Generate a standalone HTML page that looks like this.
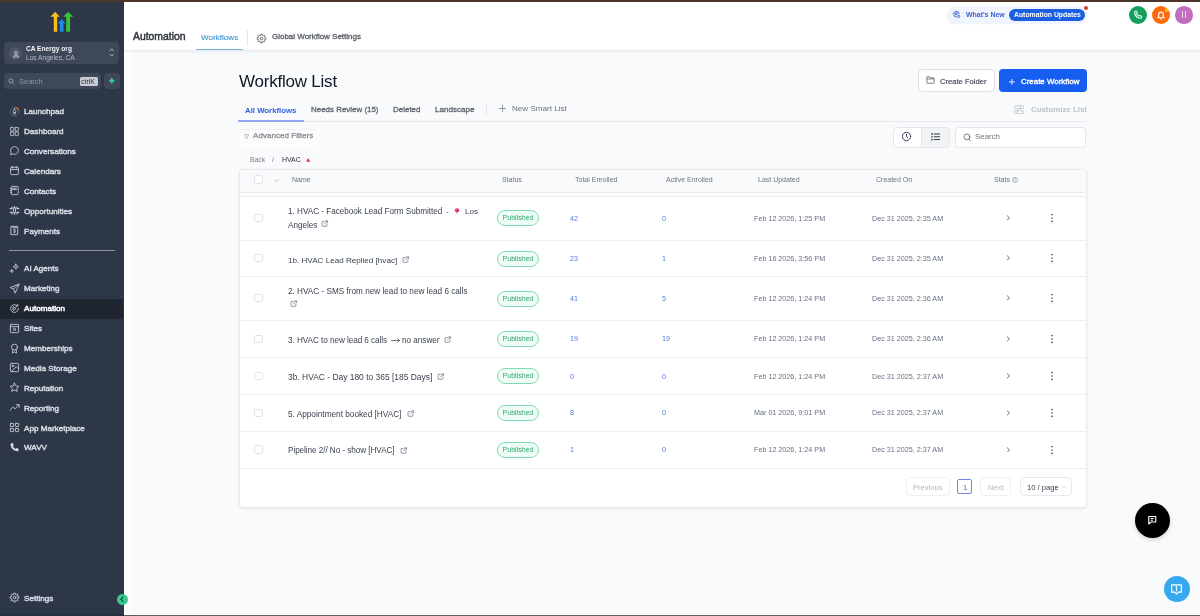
<!DOCTYPE html>
<html><head><meta charset="utf-8">
<style>
*{box-sizing:border-box;margin:0;padding:0}
html,body{width:1200px;height:616px;overflow:hidden;background:#f9fafb;font-family:"Liberation Sans",sans-serif}
.a{position:absolute}
.t{position:absolute;white-space:nowrap;line-height:1;will-change:transform}
#top{left:0;top:0;width:1200px;height:2px;background:#4b3629}
#bot{left:124px;top:614px;width:1076px;height:2px;background:#5f5f5f;border-top:1px solid #fff}
#side{left:0;top:2px;width:124px;height:614px;background:#2d3748}
.n{font-size:8.1px;color:#d3d7de;-webkit-text-stroke:0.5px #d3d7de;left:24.4px}
#card{}
#hdr{left:124px;top:2px;width:1076px;height:49px;background:#fff;border-bottom:1px solid #e8eaee;box-shadow:0 1px 3px rgba(16,24,40,.06)}
.nm{font-size:8.1px;color:#3b4350}
.nm .ext{display:inline-block;vertical-align:-0.5px;margin-left:4.5px}
.pin{display:inline-block;width:6px;height:7px;position:relative;vertical-align:0px}
.pin:before{content:"";position:absolute;left:0.8px;top:0;width:4.4px;height:4.4px;border-radius:50%;background:#e0245e}
.pin:after{content:"";position:absolute;left:2.6px;top:4px;width:0.8px;height:3px;background:#9aa0a8}
.badge{left:497px;width:42px;height:15.6px;border-radius:8px;border:1px solid #7fdcb2;background:#f0fcf6;color:#36a370;font-size:7.06px;line-height:14.2px;text-align:center;white-space:nowrap;will-change:transform}
.num{font-size:7.2px;color:#4f7be0}
.dt{font-size:7.2px;color:#667085}
</style></head><body>
<div id="top" class="a"></div>
<div id="side" class="a"></div>
<div class="a" style="left:0;top:614px;width:124px;height:2px;background:#283140"></div>
<div class="a" style="left:124px;top:51px;width:8px;height:563px;background:#fcfdfd;border-left:1px solid #fff"></div>
<div class="a" style="left:0;top:299px;width:123px;height:19.5px;background:#1f2632"></div>
<!-- logo -->
<svg class="a" style="left:45px;top:6px" width="35" height="30" viewBox="0 0 35 30">
<path fill="#f5bd1f" d="M10.1 5.8L14.8 10.7H12.2V25.8H8.8V10.7H5.4z"/>
<path fill="#1e88f0" d="M16.65 12.9L20.4 17.5H18.5V25.8H14.8V17.5H12.9z"/>
<path fill="#37c13a" d="M23.2 5.8L28.2 10.7H25.1V25.8H21.2V10.7H18.3z"/>
</svg>
<div class="a" style="left:4.3px;top:42px;width:115px;height:22px;border-radius:4px;background:#3e4858"></div>
<div class="a" style="left:8.8px;top:46.8px;width:13.4px;height:13.4px;border-radius:50%;background:#4d5666"></div>
<svg class="a" style="left:11.5px;top:49.5px" width="8" height="8" viewBox="0 0 24 24" fill="none" stroke="#d9dde3" stroke-width="2.4"><circle cx="12" cy="8" r="4.5"/><path d="M4 21c1-4 4-6 8-6s7 2 8 6z"/></svg>
<div class="t" style="left:25.8px;top:46.1px;font-size:6.6px;font-weight:700;color:#f3f4f6">CA Energy org</div>
<div class="t" style="left:25.8px;top:54.6px;font-size:6.6px;color:#b7bdc7">Los Angeles, CA</div>
<svg class="a" style="left:109px;top:48px" width="5.5" height="9" viewBox="0 0 6 10" fill="none" stroke="#c3c8d0" stroke-width="1"><path d="M.8 3.2L3 1l2.2 2.2M.8 6.8L3 9l2.2-2.2"/></svg>
<div class="a" style="left:4.3px;top:73.2px;width:96.4px;height:15.5px;border-radius:4px;background:#3e4858"></div>
<svg class="a" style="left:8.3px;top:78.2px" width="7" height="7" viewBox="0 0 24 24" fill="none" stroke="#aab1bc" stroke-width="2.6"><circle cx="10" cy="10" r="7"/><path d="M15.5 15.5L22 22"/></svg>
<div class="t" style="left:18.6px;top:77.6px;font-size:7.5px;color:#8e96a3">Search</div>
<div class="a" style="left:79.5px;top:76.8px;width:18.4px;height:8.8px;border-radius:1.5px;background:#c9cdd3"></div>
<div class="t" style="left:80.6px;top:77.6px;font-size:7px;color:#2d3748">ctrlK</div>
<div class="a" style="left:103.8px;top:73.2px;width:16px;height:15.5px;border-radius:4px;background:#3e4858"></div>
<svg class="a" style="left:107.8px;top:77.3px" width="7.6" height="7.6" viewBox="0 0 24 24"><path fill="#3ad29f" stroke="#3ad29f" stroke-width="2" stroke-linejoin="round" d="M12 3c1 4.5 4.5 8 9 9-4.5 1-8 4.5-9 9-1-4.5-4.5-8-9-9 4.5-1 8-4.5 9-9z"/></svg>
<div class="a" style="left:8.8px;top:250px;width:106.2px;height:1px;background:#8d949f"></div>
<div class="a" style="left:116.7px;top:593.8px;width:11.6px;height:11.6px;border-radius:50%;background:#37c98c"></div>
<svg class="a" style="left:119.3px;top:596.4px" width="6.4" height="6.4" viewBox="0 0 10 10" fill="none" stroke="#173a2e" stroke-width="1.7" stroke-linecap="round"><path d="M6.2 1.6L2.9 5l3.3 3.4"/></svg>
<svg class="a" style="left:8.8px;top:105.7px" width="11" height="11" viewBox="0 0 24 24" fill="none" stroke="#c9ced6" stroke-width="1.9" stroke-linecap="round" stroke-linejoin="round"><circle cx="12" cy="12" r="9.5" stroke="#5a6473"/><path d="M15 3.2a9.5 9.5 0 0 1 5.6 5" stroke="#e9803a" stroke-width="2.2"/><path d="M12 6.5c2.2 1.6 3 3.6 3 5.5l-1.5 2h-3L9 12c0-1.9.8-3.9 3-5.5zM10.5 14v3.5M13.5 14v3.5"/></svg>
<div class="t n" style="top:108.29px">Launchpad</div>
<svg class="a" style="left:8.8px;top:125.7px" width="11" height="11" viewBox="0 0 24 24" fill="none" stroke="#c9ced6" stroke-width="1.9" stroke-linecap="round" stroke-linejoin="round"><rect x="3.5" y="3" width="7" height="8" rx="1.2"/><rect x="13.5" y="3" width="7" height="8" rx="1.2"/><rect x="3.5" y="13" width="7" height="8" rx="1.2"/><rect x="13.5" y="13" width="7" height="8" rx="1.2"/></svg>
<div class="t n" style="top:128.29px">Dashboard</div>
<svg class="a" style="left:8.8px;top:145.4px" width="11" height="11" viewBox="0 0 24 24" fill="none" stroke="#c9ced6" stroke-width="1.9" stroke-linecap="round" stroke-linejoin="round"><path d="M3.5 20.5l1.3-3.9A8.5 8.5 0 1 1 8 19.6z"/></svg>
<div class="t n" style="top:147.99px">Conversations</div>
<svg class="a" style="left:8.8px;top:165.4px" width="11" height="11" viewBox="0 0 24 24" fill="none" stroke="#c9ced6" stroke-width="1.9" stroke-linecap="round" stroke-linejoin="round"><rect x="3.5" y="5" width="17" height="16" rx="2"/><path d="M3.5 10h17M8 3v4M16 3v4"/></svg>
<div class="t n" style="top:167.99px">Calendars</div>
<svg class="a" style="left:8.8px;top:185.3px" width="11" height="11" viewBox="0 0 24 24" fill="none" stroke="#c9ced6" stroke-width="1.9" stroke-linecap="round" stroke-linejoin="round"><rect x="5" y="3" width="15" height="18" rx="2"/><path d="M3 8h3M3 12h3M3 16h3M9 7h7v3H9z"/></svg>
<div class="t n" style="top:187.89px">Contacts</div>
<svg class="a" style="left:8.8px;top:205.1px" width="11" height="11" viewBox="0 0 24 24" fill="none" stroke="#c9ced6" stroke-width="1.9" stroke-linecap="round" stroke-linejoin="round"><path d="M2.5 8h4v-3.5M2.5 16h4v3.5M21.5 8h-4v-3.5M21.5 16h-4v3.5" stroke-width="2.6"/><path d="M12 3.5c2 2.5 2.5 5 2.5 7.5S14 16 12 20.5C10 16 9.5 13.5 9.5 11S10 6 12 3.5z" stroke-width="2.2"/></svg>
<div class="t n" style="top:207.69px">Opportunities</div>
<svg class="a" style="left:8.8px;top:225.1px" width="11" height="11" viewBox="0 0 24 24" fill="none" stroke="#c9ced6" stroke-width="1.9" stroke-linecap="round" stroke-linejoin="round"><path d="M5 3h14v18H5zM8 3v3h8V3"/><path d="M13.5 10.5h-2.2a1.3 1.3 0 0 0 0 2.6h1.4a1.3 1.3 0 0 1 0 2.6H10.5M12 9v1.5M12 15.7v1.5"/></svg>
<div class="t n" style="top:227.69px">Payments</div>
<svg class="a" style="left:8.8px;top:262.9px" width="11" height="11" viewBox="0 0 24 24" fill="none" stroke="#c9ced6" stroke-width="1.9" stroke-linecap="round" stroke-linejoin="round"><path d="M15 2.5l1.6 3.9 3.9 1.6-3.9 1.6L15 13.5l-1.6-3.9L9.5 8l3.9-1.6z"/><path d="M6 14v7M2.5 17.5h7"/></svg>
<div class="t n" style="top:265.49px">AI Agents</div>
<svg class="a" style="left:8.8px;top:282.9px" width="11" height="11" viewBox="0 0 24 24" fill="none" stroke="#c9ced6" stroke-width="1.9" stroke-linecap="round" stroke-linejoin="round"><path d="M21.5 2.5L2.5 10l7.5 3 3 8.5z"/><path d="M21.5 2.5L10 13"/></svg>
<div class="t n" style="top:285.49px">Marketing</div>
<svg class="a" style="left:8.8px;top:302.5px" width="11" height="11" viewBox="0 0 24 24" fill="none" stroke="#c9ced6" stroke-width="1.9" stroke-linecap="round" stroke-linejoin="round"><path d="M20.5 12a8.5 8.5 0 1 1-3-6.5"/><path d="M9.5 8.5l6 3.5-6 3.5z"/><path d="M19 3v4h-4"/></svg>
<div class="t n" style="top:305.09px;color:#fff;-webkit-text-stroke:0.5px #fff">Automation</div>
<svg class="a" style="left:8.8px;top:322.9px" width="11" height="11" viewBox="0 0 24 24" fill="none" stroke="#c9ced6" stroke-width="1.9" stroke-linecap="round" stroke-linejoin="round"><rect x="3" y="3" width="18" height="18" rx="1.5"/><path d="M3 8h18"/><circle cx="12" cy="14" r="2.5"/></svg>
<div class="t n" style="top:325.49px">Sites</div>
<svg class="a" style="left:8.8px;top:342.5px" width="11" height="11" viewBox="0 0 24 24" fill="none" stroke="#c9ced6" stroke-width="1.9" stroke-linecap="round" stroke-linejoin="round"><circle cx="12" cy="9" r="6.5"/><path d="M8.5 14.5L7.5 22l4.5-2.5 4.5 2.5-1-7.5"/></svg>
<div class="t n" style="top:345.09px">Memberships</div>
<svg class="a" style="left:8.8px;top:362.1px" width="11" height="11" viewBox="0 0 24 24" fill="none" stroke="#c9ced6" stroke-width="1.9" stroke-linecap="round" stroke-linejoin="round"><rect x="3" y="3" width="18" height="18" rx="2"/><circle cx="8.5" cy="8.5" r="1.8"/><path d="M21 15l-5-5L5 21"/></svg>
<div class="t n" style="top:364.69px">Media Storage</div>
<svg class="a" style="left:8.8px;top:382.1px" width="11" height="11" viewBox="0 0 24 24" fill="none" stroke="#c9ced6" stroke-width="1.9" stroke-linecap="round" stroke-linejoin="round"><path d="M12 2.5l2.9 6 6.6.9-4.8 4.6 1.2 6.5L12 17.4l-5.9 3.1 1.2-6.5-4.8-4.6 6.6-.9z"/></svg>
<div class="t n" style="top:384.69px">Reputation</div>
<svg class="a" style="left:8.8px;top:402.1px" width="11" height="11" viewBox="0 0 24 24" fill="none" stroke="#c9ced6" stroke-width="1.9" stroke-linecap="round" stroke-linejoin="round"><path d="M2 18l7-7 4 4 9-9M16 6h6v6"/></svg>
<div class="t n" style="top:404.69px">Reporting</div>
<svg class="a" style="left:8.8px;top:422.1px" width="11" height="11" viewBox="0 0 24 24" fill="none" stroke="#c9ced6" stroke-width="1.9" stroke-linecap="round" stroke-linejoin="round"><rect x="3" y="3" width="7" height="7" rx="1"/><rect x="14" y="3" width="7" height="7" rx="1"/><rect x="3" y="14" width="7" height="7" rx="1"/><rect x="14" y="14" width="7" height="7" rx="1"/></svg>
<div class="t n" style="top:424.69px">App Marketplace</div>
<svg class="a" style="left:8.8px;top:441.8px" width="11" height="11" viewBox="0 0 24 24" fill="none" stroke="#c9ced6" stroke-width="1.9" stroke-linecap="round" stroke-linejoin="round"><path fill="#d3d7de" stroke="none" d="M6.6 2.2c.6-.3 1.3-.1 1.7.5l2 3.3c.4.6.3 1.4-.3 1.9L8.6 9c1.2 2.6 3.3 4.7 5.9 5.9l1.1-1.4c.5-.6 1.3-.7 1.9-.3l3.3 2c.6.4.8 1.1.5 1.7l-1 2.2c-.4.8-1.2 1.2-2.1 1.1C10.1 19.4 4.1 13.5 3.2 5.4c-.1-.9.3-1.7 1.1-2.1z"/></svg>
<div class="t n" style="top:444.39px">WAVV</div>
<svg class="a" style="left:8.8px;top:592.1px" width="11" height="11" viewBox="0 0 24 24" fill="none" stroke="#c9ced6" stroke-width="1.9" stroke-linecap="round" stroke-linejoin="round"><path d="M18.99 10.26 L21.69 10.54 L21.69 13.46 L18.99 13.74 L18.17 15.71 L19.88 17.82 L17.82 19.88 L15.71 18.17 L13.74 18.99 L13.46 21.69 L10.54 21.69 L10.26 18.99 L8.29 18.17 L6.18 19.88 L4.12 17.82 L5.83 15.71 L5.01 13.74 L2.31 13.46 L2.31 10.54 L5.01 10.26 L5.83 8.29 L4.12 6.18 L6.18 4.12 L8.29 5.83 L10.26 5.01 L10.54 2.31 L13.46 2.31 L13.74 5.01 L15.71 5.83 L17.82 4.12 L19.88 6.18 L18.17 8.29z"/><circle cx="12" cy="12" r="3"/></svg>
<div class="t n" style="top:594.69px">Settings</div>
<div id="hdr" class="a"></div>
<div class="t" style="left:132.6px;top:32.1px;font-size:10.4px;color:#30353d;-webkit-text-stroke:0.45px #30353d">Automation</div>
<div class="t" style="left:200.7px;top:33.6px;font-size:8.1px;color:#3d9ad6;-webkit-text-stroke:0.15px #3d9ad6">Workflows</div>
<div class="a" style="left:196px;top:48.6px;width:47px;height:1.4px;background:#7db5dc"></div>
<div class="a" style="left:247px;top:30px;width:1px;height:16px;background:#e4e7eb"></div>
<svg class="a" style="left:256px;top:32.5px" width="11" height="11" viewBox="0 0 24 24" fill="none" stroke="#5f646c" stroke-width="1.9" stroke-linejoin="round"><path d="M18.99 10.26 L21.69 10.54 L21.69 13.46 L18.99 13.74 L18.17 15.71 L19.88 17.82 L17.82 19.88 L15.71 18.17 L13.74 18.99 L13.46 21.69 L10.54 21.69 L10.26 18.99 L8.29 18.17 L6.18 19.88 L4.12 17.82 L5.83 15.71 L5.01 13.74 L2.31 13.46 L2.31 10.54 L5.01 10.26 L5.83 8.29 L4.12 6.18 L6.18 4.12 L8.29 5.83 L10.26 5.01 L10.54 2.31 L13.46 2.31 L13.74 5.01 L15.71 5.83 L17.82 4.12 L19.88 6.18 L18.17 8.29z"/><circle cx="12" cy="12" r="3"/></svg>
<div class="t" style="left:272px;top:33.2px;font-size:7.98px;color:#585d65;-webkit-text-stroke:0.3px #585d65">Global Workflow Settings</div>
<!-- whats new -->
<div class="a" style="left:946.7px;top:6.7px;width:140px;height:17.3px;border-radius:9px;background:#f0f4fc;box-shadow:0 0 1.5px rgba(60,90,200,.12)"></div>
<svg class="a" style="left:951.7px;top:10.3px" width="9" height="8.5" viewBox="0 0 24 24" fill="none" stroke="#3d62d6" stroke-width="2.8"><path d="M20 11a8 8 0 1 0-8 9"/><path d="M10 8l5 3-5 3z"/><circle cx="18" cy="18" r="3.2"/></svg>
<div class="t" style="left:966px;top:11.6px;font-size:6.95px;font-weight:700;color:#3d62d6">What's New</div>
<div class="a" style="left:1009.3px;top:9.3px;width:76px;height:11.4px;border-radius:6px;background:#1b5fe0"></div>
<div class="t" style="left:1014px;top:11.6px;font-size:6.85px;font-weight:700;color:#fff">Automation Updates</div>
<div class="a" style="left:1084px;top:6px;width:4.2px;height:4.2px;border-radius:50%;background:#d93a30"></div>
<!-- circles -->
<div class="a" style="left:1129px;top:6px;width:18px;height:18px;border-radius:50%;background:#14a05b"></div>
<svg class="a" style="left:1133px;top:10px" width="10" height="10" viewBox="0 0 24 24" fill="none" stroke="#e8fff2" stroke-width="2.6"><path d="M6.6 2.6c.6-.3 1.3-.1 1.7.5l1.8 3c.4.6.3 1.4-.3 1.9L8.6 9c1.2 2.6 3.3 4.7 5.9 5.9l1-1.2c.5-.6 1.3-.7 1.9-.3l3 1.8c.6.4.8 1.1.5 1.7l-.9 1.9c-.4.8-1.2 1.2-2.1 1.1C10.1 19 4.5 13.4 3.6 5.6c-.1-.9.3-1.7 1.1-2.1z"/></svg>
<div class="a" style="left:1152px;top:6px;width:18px;height:18px;border-radius:50%;background:#fd6a0b"></div>
<svg class="a" style="left:1156px;top:9.6px" width="10" height="10" viewBox="0 0 24 24" fill="none" stroke="#fff" stroke-width="2.8" stroke-linejoin="round"><path d="M6.5 16.5V10.5a5.5 5.5 0 0 1 11 0v6l2 2h-15z"/><path d="M10 21.5h4"/></svg>
<div class="a" style="left:1164.8px;top:8px;width:3.6px;height:3.6px;border-radius:50%;background:#f7c21c"></div>
<div class="a" style="left:1175.3px;top:6px;width:17.6px;height:17.6px;border-radius:50%;background:#c06fbe"></div>
<div class="a" style="left:1181.8px;top:11.3px;width:1.5px;height:6.4px;background:#f3d2f2"></div>
<div class="a" style="left:1184.5px;top:11.3px;width:1.5px;height:6.4px;background:#f3d2f2"></div>
<div class="t" style="left:238.6px;top:72.6px;font-size:17px;letter-spacing:-0.22px;color:#101828">Workflow List</div>
<!-- buttons -->
<div class="a" style="left:917.5px;top:69.2px;width:77px;height:22.5px;border-radius:4px;background:#fff;border:1px solid #dde0e5"></div>
<svg class="a" style="left:925.5px;top:76px" width="9" height="8" viewBox="0 0 24 22" fill="none" stroke="#475467" stroke-width="2"><path d="M2 3.5A1.5 1.5 0 0 1 3.5 2H9l2 3h9.5A1.5 1.5 0 0 1 22 6.5v12A1.5 1.5 0 0 1 20.5 20h-17A1.5 1.5 0 0 1 2 18.5z"/><path d="M2 8h20"/></svg>
<div class="t" style="left:939.5px;top:77.8px;font-size:7.61px;color:#3a4352;-webkit-text-stroke:0.15px #3a4352">Create Folder</div>
<div class="a" style="left:999.3px;top:69.2px;width:87.5px;height:22.5px;border-radius:4px;background:#155eef"></div>
<svg class="a" style="left:1009px;top:78.8px" width="5.8" height="5.8" viewBox="0 0 10 10" stroke="#fff" stroke-width="1.5"><path d="M5 0v10M0 5h10"/></svg>
<div class="t" style="left:1020.5px;top:77.7px;font-size:7.93px;color:#fff;-webkit-text-stroke:0.35px #fff">Create Workflow</div>
<!-- tabs -->
<div class="t" style="left:245.4px;top:106.5px;font-size:7.8px;font-weight:700;color:#2e61d9">All Workflows</div>
<div class="t" style="left:311px;top:106.3px;font-size:7.94px;color:#5f6570;-webkit-text-stroke:0.3px #5f6570">Needs Review (15)</div>
<div class="t" style="left:393px;top:106.3px;font-size:7.98px;color:#5f6570;-webkit-text-stroke:0.3px #5f6570">Deleted</div>
<div class="t" style="left:435px;top:106.3px;font-size:8.1px;color:#5f6570;-webkit-text-stroke:0.3px #5f6570">Landscape</div>
<div class="a" style="left:486px;top:105px;width:1px;height:10px;background:#e1e4e8"></div>
<svg class="a" style="left:498.5px;top:105.3px" width="7" height="7" viewBox="0 0 10 10" stroke="#6b7280" stroke-width="1"><path d="M5 0v10M0 5h10"/></svg>
<div class="t" style="left:512px;top:105.2px;font-size:8.1px;color:#6b7280">New Smart List</div>
<div class="a" style="left:238px;top:121px;width:849px;height:1px;background:#e6e8ec"></div>
<div class="a" style="left:238px;top:120px;width:66px;height:2px;background:#8eaaec"></div>
<svg class="a" style="left:1013.5px;top:104.6px" width="10" height="9.5" viewBox="0 0 20 19" fill="none" stroke="#b5bac2" stroke-width="1.6"><rect x="1" y="1.5" width="18" height="6" rx="2"/><rect x="1" y="11.5" width="18" height="6" rx="2"/><path d="M13 1.5v6M7 11.5v6"/></svg>
<div class="t" style="left:1030.8px;top:105.7px;font-size:7.87px;font-weight:700;color:#bcc1c8">Customize List</div>
<!-- filters -->
<div class="a" style="left:239px;top:128.5px;width:78px;height:18px;background:#fcfcfd;border-top:1px solid #f0f1f3;border-radius:2px"></div>
<svg class="a" style="left:243.9px;top:133.8px" width="5.2" height="5.5" viewBox="0 0 10 10" fill="none" stroke="#8b9099" stroke-width="1.1"><path d="M.8 1h8.4L5 9z"/></svg>
<div class="t" style="left:252.7px;top:132.3px;font-size:8.1px;color:#80868f;-webkit-text-stroke:0.25px #80868f">Advanced Filters</div>
<div class="a" style="left:892.5px;top:126.5px;width:57.2px;height:21.2px;border-radius:4px;background:#fff;border:1px solid #e3e6ea;overflow:hidden"><div class="a" style="left:27px;top:0;width:30px;height:20px;background:#f1f3f6;border-left:1px solid #e3e6ea"></div></div>
<svg class="a" style="left:901.2px;top:131.3px" width="11" height="11" viewBox="0 0 24 24" fill="none" stroke="#344054" stroke-width="2.1" stroke-linecap="round"><circle cx="12" cy="12" r="9"/><path d="M12 7v5.2l3 2.3"/></svg>
<svg class="a" style="left:930.5px;top:133px" width="9.5" height="7.5" viewBox="0 0 20 16" fill="#344054"><circle cx="2" cy="2" r="1.8"/><circle cx="2" cy="8" r="1.8"/><circle cx="2" cy="14" r="1.8"/><rect x="6" y="1" width="14" height="2.2"/><rect x="6" y="6.9" width="14" height="2.2"/><rect x="6" y="12.8" width="14" height="2.2"/></svg>
<div class="a" style="left:955.2px;top:126.5px;width:131.2px;height:21.2px;border-radius:4px;background:#fff;border:1px solid #e3e6ea"></div>
<svg class="a" style="left:963.3px;top:132.8px" width="8.5" height="8.5" viewBox="0 0 24 24" fill="none" stroke="#4b5360" stroke-width="2.1" stroke-linecap="round"><circle cx="11" cy="11" r="8.3"/><path d="M17.2 17.2L21.5 21.5"/></svg>
<div class="t" style="left:974.7px;top:133.2px;font-size:7.9px;color:#6e737b">Search</div>
<!-- breadcrumb -->
<div class="t" style="left:249.75px;top:156.8px;font-size:6.75px;color:#777d86">Back</div>
<div class="t" style="left:271.8px;top:156.8px;font-size:6.75px;color:#777d86">/</div>
<div class="t" style="left:281.8px;top:156.8px;font-size:6.95px;color:#2c313a">HVAC</div>
<svg class="a" style="left:306px;top:157.9px" width="4.3" height="3.8" viewBox="0 0 10 9"><path fill="#d63466" d="M5 0l5 9H0z"/></svg>
<div class="a" style="left:238.5px;top:169px;width:848.5px;height:338.5px;border-radius:4px;background:#fff;border:1px solid #e8eaee;box-shadow:0 1px 3px rgba(16,24,40,.07)"></div>
<div class="a" style="left:239.5px;top:170px;width:846.5px;height:22.5px;border-radius:3px 3px 0 0;background:#f9fafb;border-bottom:1px solid #e8eaee"></div>
<div class="a" style="left:239.5px;top:196px;width:846.5px;height:1px;background:#eceef1"></div>
<div class="a" style="left:254.4px;top:175.3px;width:8.5px;height:8.7px;border-radius:2px;border:1px solid #e0e3e8;background:#fff"></div>
<svg class="a" style="left:273.8px;top:178.8px" width="5.2" height="3.2" viewBox="0 0 10 6" fill="none" stroke="#8a909a" stroke-width="1.1"><path d="M.8.8L5 5 9.2.8"/></svg>
<div class="t" style="left:292px;top:176.4px;font-size:7.0px;color:#6c7380">Name</div>
<div class="t" style="left:502px;top:176.4px;font-size:7.0px;color:#6c7380">Status</div>
<div class="t" style="left:574.5px;top:176.4px;font-size:7.0px;color:#6c7380">Total Enrolled</div>
<div class="t" style="left:666.25px;top:176.4px;font-size:7.0px;color:#6c7380">Active Enrolled</div>
<div class="t" style="left:758px;top:176.4px;font-size:7.0px;color:#6c7380">Last Updated</div>
<div class="t" style="left:876px;top:176.4px;font-size:7.0px;color:#6c7380">Created On</div>
<div class="t" style="left:994px;top:176.4px;font-size:7.0px;color:#6c7380">Stats</div>
<svg class="a" style="left:1012.4px;top:176.8px" width="6" height="6" viewBox="0 0 12 12" fill="none" stroke="#667085" stroke-width="1.1"><circle cx="6" cy="6" r="5"/><path d="M6 5.3v3.2"/><circle cx="6" cy="3.4" r=".4" fill="#667085"/></svg>
<div class="a" style="left:239.5px;top:239.5px;width:846.5px;height:1px;background:#eceef1"></div>
<div class="a" style="left:239.5px;top:276.0px;width:846.5px;height:1px;background:#eceef1"></div>
<div class="a" style="left:239.5px;top:319.5px;width:846.5px;height:1px;background:#eceef1"></div>
<div class="a" style="left:239.5px;top:357.0px;width:846.5px;height:1px;background:#eceef1"></div>
<div class="a" style="left:239.5px;top:394.0px;width:846.5px;height:1px;background:#eceef1"></div>
<div class="a" style="left:239.5px;top:430.5px;width:846.5px;height:1px;background:#eceef1"></div>
<div class="a" style="left:239.5px;top:467.5px;width:846.5px;height:1px;background:#eceef1"></div>
<div class="a" style="left:254.4px;top:213.9px;width:8.2px;height:8.2px;border-radius:2px;border:1px solid #e1e4e9;background:#fff"></div>
<div class="t nm" style="left:287.5px;top:208.0px;font-size:8.13px;letter-spacing:0px">1. HVAC - Facebook Lead Form Submitted</div>
<div class="t nm" style="left:446.4px;top:208.0px;font-size:8.1px;letter-spacing:0px">-</div>
<div class="t nm" style="left:465.2px;top:208.0px;font-size:8.1px;letter-spacing:0px">Los</div>
<div class="t nm" style="left:287.5px;top:222.0px;font-size:8.13px;letter-spacing:0px">Angeles</div>
<svg class="a" style="left:321.25px;top:220.4px" width="7.5" height="7.2" viewBox="0 0 24 24" fill="none" stroke="#667085" stroke-width="2.4" stroke-linecap="round" stroke-linejoin="round"><path d="M19 13.5V19a2 2 0 0 1-2 2H5a2 2 0 0 1-2-2V7a2 2 0 0 1 2-2h5.5"/><path d="M15 3h6v6M11 13L21 3"/></svg>
<div class="a badge" style="top:210.2px">Published</div>
<div class="t num" style="left:569.5px;top:214.6px">42</div>
<div class="t num" style="left:661.7px;top:214.6px">0</div>
<div class="t dt" style="left:753.6px;top:214.6px">Feb 12 2026, 1:25 PM</div>
<div class="t dt" style="left:871.9px;top:214.6px">Dec 31 2025, 2:35 AM</div>
<svg class="a" style="left:1005.5px;top:215.1px" width="4.5" height="5.8" viewBox="0 0 6 10" fill="none" stroke="#344054" stroke-width="1.35"><path d="M1 1l4 4-4 4"/></svg>
<svg class="a" style="left:1050px;top:213.00px" width="4" height="10" viewBox="0 0 4 10" fill="#3b4452"><circle cx="2" cy="1.6" r="0.82"/><circle cx="2" cy="5" r="0.82"/><circle cx="2" cy="8.4" r="0.82"/></svg>
<div class="a" style="left:254.4px;top:254.2px;width:8.2px;height:8.2px;border-radius:2px;border:1px solid #e1e4e9;background:#fff"></div>
<div class="t nm" style="left:287.5px;top:257.2px;font-size:8.11px;letter-spacing:0px">1b. HVAC Lead Replied [hvac]</div>
<svg class="a" style="left:402.3px;top:255.8px" width="7.5" height="7.2" viewBox="0 0 24 24" fill="none" stroke="#667085" stroke-width="2.4" stroke-linecap="round" stroke-linejoin="round"><path d="M19 13.5V19a2 2 0 0 1-2 2H5a2 2 0 0 1-2-2V7a2 2 0 0 1 2-2h5.5"/><path d="M15 3h6v6M11 13L21 3"/></svg>
<div class="a badge" style="top:250.5px">Published</div>
<div class="t num" style="left:569.5px;top:254.9px">23</div>
<div class="t num" style="left:661.7px;top:254.9px">1</div>
<div class="t dt" style="left:753.6px;top:254.9px">Feb 16 2026, 3:56 PM</div>
<div class="t dt" style="left:871.9px;top:254.9px">Dec 31 2025, 2:35 AM</div>
<svg class="a" style="left:1005.5px;top:255.4px" width="4.5" height="5.8" viewBox="0 0 6 10" fill="none" stroke="#344054" stroke-width="1.35"><path d="M1 1l4 4-4 4"/></svg>
<svg class="a" style="left:1050px;top:253.30px" width="4" height="10" viewBox="0 0 4 10" fill="#3b4452"><circle cx="2" cy="1.6" r="0.82"/><circle cx="2" cy="5" r="0.82"/><circle cx="2" cy="8.4" r="0.82"/></svg>
<div class="a" style="left:254.4px;top:294.2px;width:8.2px;height:8.2px;border-radius:2px;border:1px solid #e1e4e9;background:#fff"></div>
<div class="t nm" style="left:287.5px;top:287.6px;font-size:8.2px;letter-spacing:0px">2. HVAC - SMS from new lead to new lead 6 calls</div>
<svg class="a" style="left:290.3px;top:300.3px" width="7.5" height="7.2" viewBox="0 0 24 24" fill="none" stroke="#667085" stroke-width="2.4" stroke-linecap="round" stroke-linejoin="round"><path d="M19 13.5V19a2 2 0 0 1-2 2H5a2 2 0 0 1-2-2V7a2 2 0 0 1 2-2h5.5"/><path d="M15 3h6v6M11 13L21 3"/></svg>
<div class="a badge" style="top:290.5px">Published</div>
<div class="t num" style="left:569.5px;top:294.9px">41</div>
<div class="t num" style="left:661.7px;top:294.9px">5</div>
<div class="t dt" style="left:753.6px;top:294.9px">Feb 12 2026, 1:24 PM</div>
<div class="t dt" style="left:871.9px;top:294.9px">Dec 31 2025, 2:36 AM</div>
<svg class="a" style="left:1005.5px;top:295.4px" width="4.5" height="5.8" viewBox="0 0 6 10" fill="none" stroke="#344054" stroke-width="1.35"><path d="M1 1l4 4-4 4"/></svg>
<svg class="a" style="left:1050px;top:293.30px" width="4" height="10" viewBox="0 0 4 10" fill="#3b4452"><circle cx="2" cy="1.6" r="0.82"/><circle cx="2" cy="5" r="0.82"/><circle cx="2" cy="8.4" r="0.82"/></svg>
<div class="a" style="left:254.4px;top:334.7px;width:8.2px;height:8.2px;border-radius:2px;border:1px solid #e1e4e9;background:#fff"></div>
<div class="t nm" style="left:287.5px;top:337.1px;font-size:8.2px;letter-spacing:-0.065px">3. HVAC to new lead 6 calls</div>
<div class="t nm" style="left:401.7px;top:337.1px;font-size:8.15px;letter-spacing:0px">no answer</div>
<svg class="a" style="left:444.3px;top:335.7px" width="7.5" height="7.2" viewBox="0 0 24 24" fill="none" stroke="#667085" stroke-width="2.4" stroke-linecap="round" stroke-linejoin="round"><path d="M19 13.5V19a2 2 0 0 1-2 2H5a2 2 0 0 1-2-2V7a2 2 0 0 1 2-2h5.5"/><path d="M15 3h6v6M11 13L21 3"/></svg>
<div class="a badge" style="top:331.0px">Published</div>
<div class="t num" style="left:569.5px;top:335.4px">19</div>
<div class="t num" style="left:661.7px;top:335.4px">19</div>
<div class="t dt" style="left:753.6px;top:335.4px">Feb 12 2026, 1:24 PM</div>
<div class="t dt" style="left:871.9px;top:335.4px">Dec 31 2025, 2:36 AM</div>
<svg class="a" style="left:1005.5px;top:335.9px" width="4.5" height="5.8" viewBox="0 0 6 10" fill="none" stroke="#344054" stroke-width="1.35"><path d="M1 1l4 4-4 4"/></svg>
<svg class="a" style="left:1050px;top:333.80px" width="4" height="10" viewBox="0 0 4 10" fill="#3b4452"><circle cx="2" cy="1.6" r="0.82"/><circle cx="2" cy="5" r="0.82"/><circle cx="2" cy="8.4" r="0.82"/></svg>
<div class="a" style="left:254.4px;top:371.9px;width:8.2px;height:8.2px;border-radius:2px;border:1px solid #e1e4e9;background:#fff"></div>
<div class="t nm" style="left:287.5px;top:373.0px;font-size:8.45px;letter-spacing:0px">3b. HVAC - Day 180 to 365 [185 Days]</div>
<svg class="a" style="left:437.3px;top:372.7px" width="7.5" height="7.2" viewBox="0 0 24 24" fill="none" stroke="#667085" stroke-width="2.4" stroke-linecap="round" stroke-linejoin="round"><path d="M19 13.5V19a2 2 0 0 1-2 2H5a2 2 0 0 1-2-2V7a2 2 0 0 1 2-2h5.5"/><path d="M15 3h6v6M11 13L21 3"/></svg>
<div class="a badge" style="top:368.2px">Published</div>
<div class="t num" style="left:569.5px;top:372.6px">0</div>
<div class="t num" style="left:661.7px;top:372.6px">0</div>
<div class="t dt" style="left:753.6px;top:372.6px">Feb 12 2026, 1:24 PM</div>
<div class="t dt" style="left:871.9px;top:372.6px">Dec 31 2025, 2:37 AM</div>
<svg class="a" style="left:1005.5px;top:373.1px" width="4.5" height="5.8" viewBox="0 0 6 10" fill="none" stroke="#344054" stroke-width="1.35"><path d="M1 1l4 4-4 4"/></svg>
<svg class="a" style="left:1050px;top:371.00px" width="4" height="10" viewBox="0 0 4 10" fill="#3b4452"><circle cx="2" cy="1.6" r="0.82"/><circle cx="2" cy="5" r="0.82"/><circle cx="2" cy="8.4" r="0.82"/></svg>
<div class="a" style="left:254.4px;top:408.7px;width:8.2px;height:8.2px;border-radius:2px;border:1px solid #e1e4e9;background:#fff"></div>
<div class="t nm" style="left:287.5px;top:411.1px;font-size:8.24px;letter-spacing:0px">5. Appointment booked [HVAC]</div>
<svg class="a" style="left:406.7px;top:409.8px" width="7.5" height="7.2" viewBox="0 0 24 24" fill="none" stroke="#667085" stroke-width="2.4" stroke-linecap="round" stroke-linejoin="round"><path d="M19 13.5V19a2 2 0 0 1-2 2H5a2 2 0 0 1-2-2V7a2 2 0 0 1 2-2h5.5"/><path d="M15 3h6v6M11 13L21 3"/></svg>
<div class="a badge" style="top:405.0px">Published</div>
<div class="t num" style="left:569.5px;top:409.4px">8</div>
<div class="t num" style="left:661.7px;top:409.4px">0</div>
<div class="t dt" style="left:753.6px;top:409.4px">Mar 01 2026, 9:01 PM</div>
<div class="t dt" style="left:871.9px;top:409.4px">Dec 31 2025, 2:37 AM</div>
<svg class="a" style="left:1005.5px;top:409.9px" width="4.5" height="5.8" viewBox="0 0 6 10" fill="none" stroke="#344054" stroke-width="1.35"><path d="M1 1l4 4-4 4"/></svg>
<svg class="a" style="left:1050px;top:407.80px" width="4" height="10" viewBox="0 0 4 10" fill="#3b4452"><circle cx="2" cy="1.6" r="0.82"/><circle cx="2" cy="5" r="0.82"/><circle cx="2" cy="8.4" r="0.82"/></svg>
<div class="a" style="left:254.4px;top:445.4px;width:8.2px;height:8.2px;border-radius:2px;border:1px solid #e1e4e9;background:#fff"></div>
<div class="t nm" style="left:287.5px;top:447.4px;font-size:8.2px;letter-spacing:-0.07px">Pipeline 2// No - show [HVAC]</div>
<svg class="a" style="left:400px;top:446.8px" width="7.5" height="7.2" viewBox="0 0 24 24" fill="none" stroke="#667085" stroke-width="2.4" stroke-linecap="round" stroke-linejoin="round"><path d="M19 13.5V19a2 2 0 0 1-2 2H5a2 2 0 0 1-2-2V7a2 2 0 0 1 2-2h5.5"/><path d="M15 3h6v6M11 13L21 3"/></svg>
<div class="a badge" style="top:441.7px">Published</div>
<div class="t num" style="left:569.5px;top:446.1px">1</div>
<div class="t num" style="left:661.7px;top:446.1px">0</div>
<div class="t dt" style="left:753.6px;top:446.1px">Feb 12 2026, 1:24 PM</div>
<div class="t dt" style="left:871.9px;top:446.1px">Dec 31 2025, 2:37 AM</div>
<svg class="a" style="left:1005.5px;top:446.6px" width="4.5" height="5.8" viewBox="0 0 6 10" fill="none" stroke="#344054" stroke-width="1.35"><path d="M1 1l4 4-4 4"/></svg>
<svg class="a" style="left:1050px;top:444.50px" width="4" height="10" viewBox="0 0 4 10" fill="#3b4452"><circle cx="2" cy="1.6" r="0.82"/><circle cx="2" cy="5" r="0.82"/><circle cx="2" cy="8.4" r="0.82"/></svg>
<svg class="a" style="left:390.5px;top:337.5px" width="9" height="5" viewBox="0 0 18 10" fill="none" stroke="#3b4350" stroke-width="1.5" stroke-linecap="round" stroke-linejoin="round"><path d="M1 5h16M13 1.5L17 5l-4 3.5"/></svg>
<svg class="a" style="left:454.2px;top:207.6px" width="6" height="7.8" viewBox="0 0 12 15.6"><path d="M5.3 7h1.4L6.2 15.4H5.8z" fill="#8d939c"/><circle cx="6" cy="4.6" r="4.3" fill="#dd2e63"/><circle cx="4.5" cy="3.2" r="1.3" fill="#f07a9c"/></svg>
<div class="a" style="left:905.8px;top:477px;width:44px;height:19.3px;border-radius:4px;border:1px solid #eef0f3;background:#fff"></div>
<div class="t" style="left:912.5px;top:483.6px;font-size:7.58px;color:#b3b8c0">Previous</div>
<div class="a" style="left:957.2px;top:479.2px;width:15.3px;height:14.6px;border-radius:2px;border:1px solid #6c88e2;background:#fff"></div>
<div class="t" style="left:962.6px;top:483.6px;font-size:7.58px;color:#4a6ee0">1</div>
<div class="a" style="left:980px;top:477px;width:31.3px;height:19.3px;border-radius:4px;border:1px solid #eef0f3;background:#fff"></div>
<div class="t" style="left:987.5px;top:483.6px;font-size:7.58px;color:#b3b8c0">Next</div>
<div class="a" style="left:1019.7px;top:477px;width:52.8px;height:19.3px;border-radius:4px;border:1px solid #e8eaee;background:#fff"></div>
<div class="t" style="left:1026.7px;top:483.6px;font-size:7.58px;color:#344054">10 / page</div>
<svg class="a" style="left:1061.7px;top:486px" width="4.2" height="2.6" viewBox="0 0 10 6" fill="none" stroke="#a0a6ae" stroke-width="1.1"><path d="M.8.8L5 5 9.2.8"/></svg>
<div class="a" style="left:1135px;top:502.5px;width:35px;height:35px;border-radius:50%;background:#000;box-shadow:0 2px 4px rgba(0,0,0,.15)"></div>
<svg class="a" style="left:1147.3px;top:514.8px" width="10.5" height="10.5" viewBox="0 0 24 24" fill="none" stroke="#fff" stroke-width="2.6" stroke-linejoin="round"><path d="M4 3.5h16v12.5H9.5L4 20.5z"/><path d="M8.5 8h7M8.5 12h5"/></svg>
<div class="a" style="left:1163.7px;top:576px;width:26px;height:26px;border-radius:50%;background:#38a8ef"></div>
<svg class="a" style="left:1170.2px;top:582.5px" width="13" height="13" viewBox="0 0 24 24" fill="none" stroke="#fff" stroke-width="2.2" stroke-linejoin="round" stroke-linecap="round"><path d="M3 3.5h18v13.5h-6l-3 3.5-3-3.5H3z"/><path d="M12 10v4.5"/><circle cx="12" cy="7" r=".6" fill="#fff"/></svg>
<div id="bot" class="a"></div>
</body></html>
